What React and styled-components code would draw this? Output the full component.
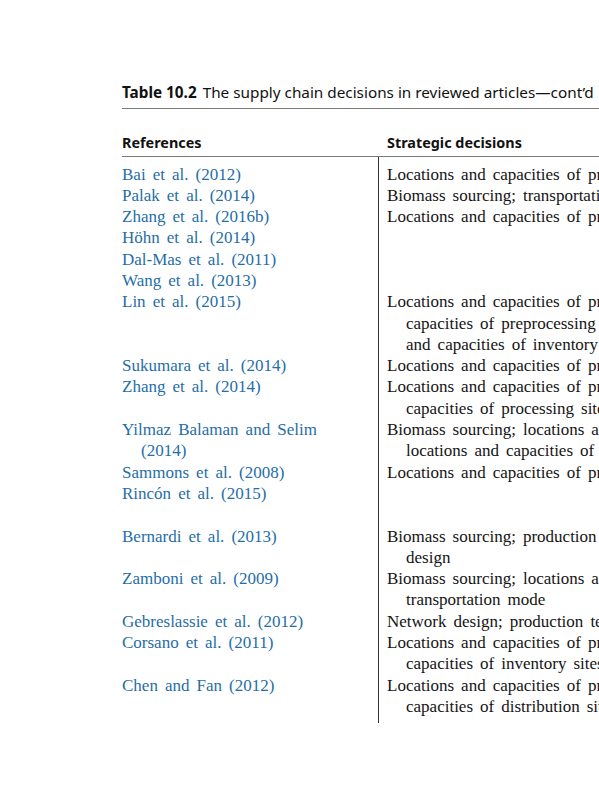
import React from "react";
import styled, { createGlobalStyle } from "styled-components";

const Global = createGlobalStyle`
  html, body { margin: 0; padding: 0; background: #fff; overflow: hidden; }
  body { width: 599px; height: 800px; }
`;

const Page = styled.div`
  padding: 82px 0 0 122px;
  width: 900px;
`;

const Caption = styled.div`
  font-family: "Noto Sans", "Open Sans", sans-serif;
  font-size: 15.3px;
  line-height: 20px;
  color: #111;
  padding-bottom: 6px;
  border-bottom: 1.5px solid #7a7a7a;
  white-space: nowrap;
`;

const CaptionNum = styled.span`
  font-weight: 700;
  margin-right: 6px;
`;

const Grid = styled.div`
  display: grid;
  grid-template-columns: 257px 1fr;
`;

const HeadCell = styled.div`
  font-family: "Noto Sans", "Open Sans", sans-serif;
  font-weight: 700;
  font-size: 14.4px;
  line-height: 20px;
  color: #111;
  padding: 24px 0 3px ${(p) => (p.$right ? "8px" : "0")};
  border-bottom: 1.5px solid #7a7a7a;
  white-space: nowrap;
`;

const serif = `
  font-family: "Liberation Serif", serif;
  font-size: 17px;
  line-height: 21.3px;
  word-spacing: 2.8px;
`;

const RefCell = styled.div`
  ${serif}
  color: #1f6ea8;
  border-right: 1px solid #333;
  padding: ${(p) => (p.$first ? "6.5px" : "0")} 30px 0 0;
  min-height: ${(p) => p.$lines * 21.3}px;
`;

const Ref = styled.div`
  padding-left: 19px;
  text-indent: -19px;
`;

const TextCell = styled.div`
  ${serif}
  color: #141414;
  padding: ${(p) => (p.$first ? "6.5px" : "0")} 0
    ${(p) => (p.$last ? "6px" : "0")} 8px;
  white-space: nowrap;
`;

const Line = styled.div`
  padding-left: ${(p) => (p.$cont ? "19px" : "0")};
`;

const rows = [
  { refs: ["Bai et al. (2012)"], lines: ["Locations and capacities of processing sites"] },
  { refs: ["Palak et al. (2014)"], lines: ["Biomass sourcing; transportation mode"] },
  { refs: ["Zhang et al. (2016b)"], lines: ["Locations and capacities of processing sites"] },
  { refs: ["Höhn et al. (2014)"], lines: [] },
  { refs: ["Dal-Mas et al. (2011)"], lines: [] },
  { refs: ["Wang et al. (2013)"], lines: [] },
  {
    refs: ["Lin et al. (2015)"],
    lines: [
      "Locations and capacities of processing sites; locations and",
      "capacities of preprocessing sites; locations",
      "and capacities of inventory sites",
    ],
  },
  { refs: ["Sukumara et al. (2014)"], lines: ["Locations and capacities of processing sites"] },
  {
    refs: ["Zhang et al. (2014)"],
    lines: ["Locations and capacities of preprocessing sites; locations and", "capacities of processing sites"],
  },
  {
    refs: ["Yilmaz Balaman and Selim (2014)"],
    lines: ["Biomass sourcing; locations and capacities of storage sites;", "locations and capacities of processing sites"],
  },
  { refs: ["Sammons et al. (2008)"], lines: ["Locations and capacities of processing sites"] },
  { refs: ["Rincón et al. (2015)"], lines: [], min: 2 },
  {
    refs: ["Bernardi et al. (2013)"],
    lines: ["Biomass sourcing; production capacity; network", "design"],
  },
  {
    refs: ["Zamboni et al. (2009)"],
    lines: ["Biomass sourcing; locations and capacities of sites;", "transportation mode"],
  },
  { refs: ["Gebreslassie et al. (2012)"], lines: ["Network design; production technologies"] },
  {
    refs: ["Corsano et al. (2011)"],
    lines: ["Locations and capacities of processing sites; locations and", "capacities of inventory sites"],
  },
  {
    refs: ["Chen and Fan (2012)"],
    lines: ["Locations and capacities of processing sites; locations and", "capacities of distribution sites"],
  },
];

export default function App() {
  return (
    <>
      <Global />
      <Page>
        <Caption>
          <CaptionNum>Table 10.2</CaptionNum>The supply chain decisions in reviewed articles—cont’d
        </Caption>
        <Grid>
          <HeadCell>References</HeadCell>
          <HeadCell $right>Strategic decisions</HeadCell>
          {rows.map((r, i) => {
            const first = i === 0;
            const last = i === rows.length - 1;
            return (
              <React.Fragment key={i}>
                <RefCell $first={first} $lines={r.min || 1}>
                  {r.refs.map((t) => (
                    <Ref key={t}>{t}</Ref>
                  ))}
                </RefCell>
                <TextCell $first={first} $last={last}>
                  {r.lines.map((l, j) => (
                    <Line key={j} $cont={j > 0}>
                      {l}
                    </Line>
                  ))}
                </TextCell>
              </React.Fragment>
            );
          })}
        </Grid>
      </Page>
    </>
  );
}
